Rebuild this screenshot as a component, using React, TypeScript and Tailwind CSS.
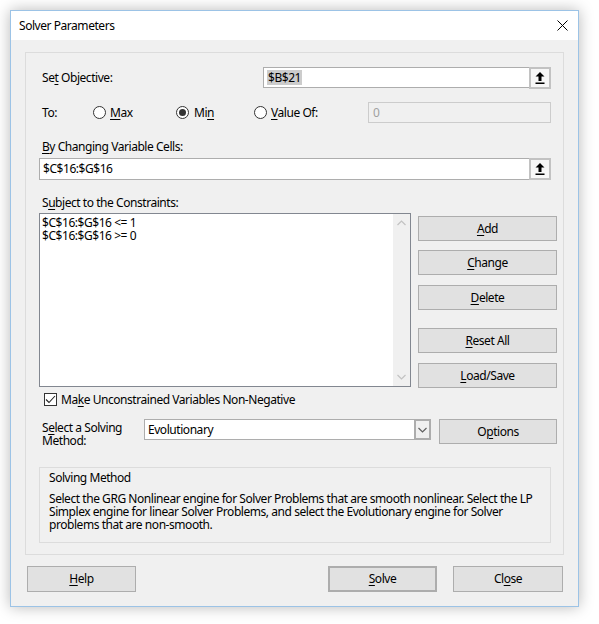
import React from "react";

const U = ({ c }: { c: string }) => <span className="underline underline-offset-[2px] decoration-[1px]">{c}</span>;

const Btn = ({ children, className = "" }: { children: React.ReactNode; className?: string }) => (
  <div className={`flex items-center justify-center bg-[#e1e1e1] border border-[#adadad] text-[12px] text-black ${className}`}>
    {children}
  </div>
);

const UploadBtn = () => (
  <div className="w-[22px] h-[22px] border-2 border-[#c2c2c2] bg-[#f7f7f7] flex items-center justify-center -my-px -mr-px">
    <svg width="10" height="12" viewBox="0 0 10 12">
      <path d="M5 0 L9.5 4.5 L6.5 4.5 L6.5 9 L3.5 9 L3.5 4.5 L0.5 4.5 Z" fill="#000" />
      <rect x="0.5" y="10.5" width="9" height="1.5" fill="#000" />
    </svg>
  </div>
);

const Radio = ({ checked }: { checked?: boolean }) => (
  <div className="w-[13px] h-[13px] rounded-full border border-[#333] bg-white flex items-center justify-center">
    {checked && <div className="w-[7px] h-[7px] rounded-full bg-[#333]" />}
  </div>
);

const Chevron = ({ up, color = "#c2c2c2" }: { up?: boolean; color?: string }) => (
  <svg width="9" height="6" viewBox="0 0 9 6">
    <path d={up ? "M0.5 5 L4.5 1 L8.5 5" : "M0.5 1 L4.5 5 L8.5 1"} stroke={color} strokeWidth="1.2" fill="none" />
  </svg>
);

export default function App() {
  return (
    <div className="w-[599px] h-[624px] bg-white pt-[10px] pl-[10px] font-['Segoe_UI','Noto_Sans',sans-serif] text-[12px] tracking-[-0.45px] text-black">
      <div className="w-[569px] h-[597px] border border-[#9cc3e6] bg-[#f0f0f0] shadow-[0_0_14px_rgba(0,0,0,0.28)] flex flex-col">
        {/* Title bar */}
        <div className="h-[29px] bg-white flex items-center justify-between pl-[8px] pr-[10px] shrink-0">
          <span className="text-[12px] leading-[16px]">Solver Parameters</span>
          <svg width="11" height="11" viewBox="0 0 11 11">
            <path d="M0.5 0.5 L10.5 10.5 M10.5 0.5 L0.5 10.5" stroke="#000" strokeWidth="1" />
          </svg>
        </div>
        {/* Body */}
        <div className="flex flex-col">
          <div className="mx-[14px] mt-[12px] h-[503px] border border-[#dcdcdc] pl-[13px] flex flex-col">
            {/* Row 1 */}
            <div className="mt-[14px] h-[21px] flex items-center">
              <div className="w-[224px] pl-[3px] leading-[16px]">Se<U c="t" /> Objective:</div>
              <div className="w-[288px] h-[21px] border border-[#adadad] bg-white flex items-center justify-between">
                <span className="ml-[3px] bg-[#cccccc] px-px leading-[15px]">$B$21</span>
                <UploadBtn />
              </div>
            </div>
            {/* Row 2 */}
            <div className="mt-[14px] h-[21px] flex items-center">
              <div className="w-[54px] pl-[3px] leading-[16px]">To:</div>
              <div className="w-[83px] flex items-center gap-[4px]">
                <Radio />
                <span><U c="M" />ax</span>
              </div>
              <div className="w-[78px] flex items-center gap-[5px]">
                <Radio checked />
                <span>Mi<U c="n" /></span>
              </div>
              <div className="w-[114px] flex items-center gap-[4px]">
                <Radio />
                <span><U c="V" />alue Of:</span>
              </div>
              <div className="w-[183px] h-[21px] border border-[#cccccc] bg-[#f0f0f0] flex items-center">
                <span className="ml-[4px] text-[#a0a0a0]">0</span>
              </div>
            </div>
            {/* Row 3 */}
            <div className="mt-[16px] h-[16px] leading-[16px] pl-[3px]"><U c="B" />y Changing Variable Cells:</div>
            <div className="mt-[3px] w-[512px] h-[22px] border border-[#adadad] bg-white flex items-center justify-between">
              <span className="ml-[3px]">$C$16:$G$16</span>
              <UploadBtn />
            </div>
            {/* Row 4 */}
            <div className="mt-[15px] h-[16px] leading-[16px] pl-[3px]">S<U c="u" />bject to the Constraints:</div>
            <div className="mt-[2px] flex gap-[7px]">
              <div className="w-[372px] h-[174px] border border-[#828790] bg-white flex">
                <div className="flex-1 pl-[2px] pt-[2px] leading-[13px]">
                  <div>$C$16:$G$16 &lt;= 1</div>
                  <div>$C$16:$G$16 &gt;= 0</div>
                </div>
                <div className="w-[17px] bg-[#f0f0f0] flex flex-col items-center justify-between py-[6px]">
                  <Chevron up />
                  <Chevron />
                </div>
              </div>
              <div className="flex flex-col pt-[3px]">
                <Btn className="w-[139px] h-[25px]"><span><U c="A" />dd</span></Btn>
                <Btn className="w-[139px] h-[25px] mt-[9px]"><span><U c="C" />hange</span></Btn>
                <Btn className="w-[139px] h-[25px] mt-[10px]"><span><U c="D" />elete</span></Btn>
                <Btn className="w-[139px] h-[25px] mt-[18px]"><span><U c="R" />eset All</span></Btn>
                <Btn className="w-[139px] h-[25px] mt-[10px]"><span><U c="L" />oad/Save</span></Btn>
              </div>
            </div>
            {/* Checkbox */}
            <div className="mt-[5px] h-[13px] flex items-center">
              <div className="ml-[5px] w-[13px] h-[13px] border border-[#333] bg-white flex items-center justify-center">
                <svg width="11" height="9" viewBox="0 0 11 9">
                  <path d="M1 4.5 L4 7.5 L10 1" stroke="#222" strokeWidth="1.1" fill="none" />
                </svg>
              </div>
              <span className="ml-[4px]">Ma<U c="k" />e Unconstrained Variables Non-Negative</span>
            </div>
            {/* Select row */}
            <div className="mt-[13px] h-[28px] flex items-start">
              <div className="w-[105px] pl-[3px] pt-[2px] leading-[13px]">
                <div>S<U c="e" />lect a Solving</div>
                <div>Method:</div>
              </div>
              <div className="w-[287px] h-[21px] border border-[#adadad] bg-white flex items-center justify-between">
                <span className="ml-[3px]">Evolutionary</span>
                <div className="w-[17px] h-[21px] border-2 border-[#adadad] bg-[#f0f0f0] flex items-center justify-center -my-px -mr-px">
                  <Chevron color="#606060" />
                </div>
              </div>
              <Btn className="ml-[8px] w-[118px] h-[25px]"><span>O<U c="p" />tions</span></Btn>
            </div>
            {/* Solving method box */}
            <div className="mt-[20px] w-[512px] h-[76px] border border-[#dcdcdc] pl-[9px] pr-[8px] flex flex-col">
              <div className="pt-[2px] h-[18px] leading-[16px]">Solving Method</div>
              <div className="mt-[6px] leading-[13px]">
                Select the GRG Nonlinear engine for Solver Problems that are smooth nonlinear. Select the LP Simplex engine for linear Solver Problems, and select the Evolutionary engine for Solver problems that are non-smooth.
              </div>
            </div>
          </div>
          {/* Bottom buttons */}
          <div className="mt-[11px] flex">
            <Btn className="ml-[16px] w-[109px] h-[26px]"><span><U c="H" />elp</span></Btn>
            <Btn className="ml-[192px] w-[109px] h-[26px] border-2 border-[#0078d7]"><span><U c="S" />olve</span></Btn>
            <Btn className="ml-[16px] w-[110px] h-[26px]"><span>Cl<U c="o" />se</span></Btn>
          </div>
        </div>
      </div>
    </div>
  );
}
